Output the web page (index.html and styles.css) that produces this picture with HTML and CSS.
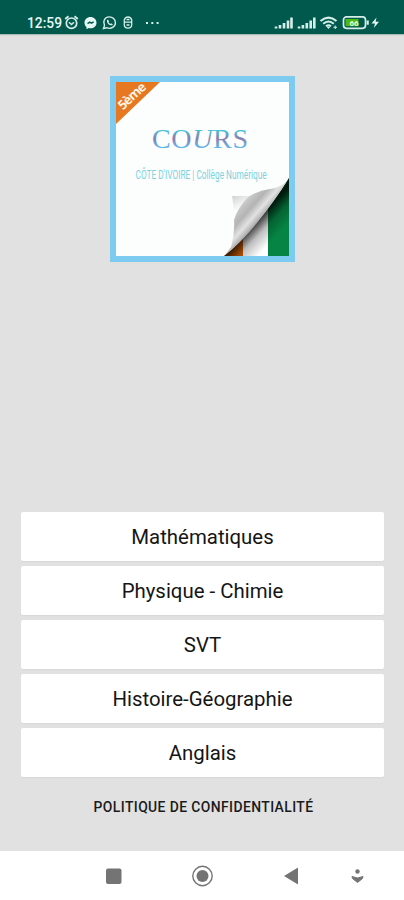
FILE: index.html
```html
<!DOCTYPE html>
<html lang="fr">
<head>
    <meta charset="UTF-8">
    <meta name="viewport" content="width=device-width, initial-scale=1.0">
    <title>Cours 5ème</title>
    <link rel="stylesheet" href="styles.css">
</head>
<body>
    <div class="screen">
        <!-- Status bar -->
        <header class="status-bar">
            <span class="time">12:59</span>
            <svg class="notifications" width="98" height="16" viewBox="0 0 98 16" fill="none" stroke="#d5eee9">
                <!-- alarm -->
                <circle cx="7.5" cy="8.2" r="5.2" stroke-width="1.7"/>
                <path d="M1.2 4L4.500 1.300M10.500 1.300L13.800 4" stroke-width="1.900"/>
                <path d="M5 7.300L7.500 9.500L10 7.300" stroke-width="1.500"/>
                <!-- messenger -->
                <path d="M26.500 2C23 2 20.500 4.500 20.500 7.700C20.500 9.500 21.300 11 22.500 12V14.300L24.700 13.100C29.200 14 32.500 11.300 32.500 7.700C32.500 4.500 30 2 26.500 2Z" fill="#e6f8f5" stroke="none"/>
                <path d="M23.500 8.700L25.800 7.200L27.400 8.200L29.700 6.900" stroke="#00594c" stroke-width="1.500"/>
                <!-- whatsapp -->
                <path d="M39.500 13.500L40.500 10.400C38.300 6.300 41 1.900 45.200 1.900C48.800 1.900 51.400 4.500 51.400 7.700C51.400 11.800 47 14.600 42.700 12.700Z" stroke-width="1.400"/>
                <path d="M43 5C42.500 8 45 10.500 48.300 10.300L48.800 9.200L47 8.200L46.200 8.900L44.500 7.200L45 6.300L44.200 4.700Z" fill="#d5eee9" stroke="none"/>
                <!-- mouse -->
                <path d="M60.300 7V5Q61 2 64 2T67.700 5V9.800Q67.700 13.200 64 13.200T60.300 9.800ZM60.500 7.200H67.500M62.500 4.500H65.500M62.500 10H65.500" stroke-width="1.300"/>
                <!-- more -->
                <path d="M82 8H84M87.300 8H89.300M92.600 8H94.600" stroke-width="2"/>
            </svg>
            <svg class="system" width="108" height="16" viewBox="0 0 108 16" fill="none" stroke="#d5eee9">
                <!-- signal x2 -->
                <path d="M2 13.500V11.500M6 13.500V10M10 13.500V8M14 13.500V5.500M17.500 13.500V2.500M25 13.500V11.500M28.900 13.500V10M32.800 13.500V8M36.700 13.500V5.500M40.300 13.500V2.500" stroke-width="2.600"/>
                <!-- wifi -->
                <path d="M46.500 6Q54.500 -.8 62.500 6M49.200 8.800Q54.500 4.200 59.800 8.800M52 11.300Q54.500 9.300 57 11.300" stroke-width="2.100"/>
                <path d="M52.800 12L54.500 13.900L56.200 12Z" fill="#d5eee9" stroke="none"/>
                <path d="M61.200 10.500V14M59.400 12.300H63" stroke-width="1"/>
                <!-- battery -->
                <rect x="69.500" y="1.900" width="22" height="11.400" rx="3" stroke-width="1.700"/>
                <path d="M93.700 5.500V9.700" stroke-width="2.200"/>
                <path d="M71.500 4H84.500V11.200H71.500Z" fill="#4cba16" stroke="none"/>
                <text x="75.500" y="10.700" class="battery-level">66</text>
                <path d="M102.500 2.500L97.500 8.600H101L99.800 13L105 6.700H101.600Z" fill="#e6f8f5" stroke="none"/>
            </svg>
        </header>

        <main class="content">
            <svg class="logo" width="185" height="186" viewBox="0 0 185 186">
                <defs>
                    <linearGradient id="title" x1="0" y1="0" x2="0" y2="1">
                        <stop offset=".25" stop-color="#46c0d8"/>
                        <stop offset=".5" stop-color="#8a7fae"/>
                        <stop offset=".78" stop-color="#62b5e8"/>
                    </linearGradient>
                    <linearGradient id="curl" gradientUnits="userSpaceOnUse" x1="124" y1="125" x2="150" y2="148">
                        <stop offset="0" stop-color="#f4f4f4"/>
                        <stop offset=".3" stop-color="#c4c4c4"/>
                        <stop offset=".5" stop-color="#b4b4b4"/>
                        <stop offset=".72" stop-color="#e2e2e2"/>
                        <stop offset=".88" stop-color="#b4b4b4"/>
                        <stop offset="1" stop-color="#777"/>
                    </linearGradient>
                    <linearGradient id="shade" gradientUnits="userSpaceOnUse" x1="143" y1="149" x2="161" y2="166">
                        <stop offset="0" stop-color="#000" stop-opacity=".8"/>
                        <stop offset=".45" stop-color="#000" stop-opacity=".25"/>
                        <stop offset="1" stop-color="#000" stop-opacity="0"/>
                    </linearGradient>
                    <linearGradient id="tip" x1="0" y1="0" x2=".6" y2="1">
                        <stop offset="0" stop-color="#d2d2d2"/>
                        <stop offset=".6" stop-color="#fcfdfd"/>
                    </linearGradient>
                    <clipPath id="corner">
                        <path d="M179 102Q164 126 146 147Q131 166 114 180H179Z"/>
                    </clipPath>
                </defs>
                <rect width="185" height="186" fill="#7ecbf2"/>
                <rect x="6" y="6" width="173" height="174" fill="#fcfdfd"/>
                <path d="M6 6H50L6 48Z" fill="#e57820"/>
                <text class="level" x="0" y="0" textLength="33" transform="translate(13 34.500) rotate(-43)">5ème</text>
                <text class="logo-title" x="42" y="72" textLength="96" fill="url(#title)">CO<tspan class="swash">U</tspan>RS</text>
                <text class="logo-subtitle" transform="translate(25.500 102.500) scale(.638 1)">CÔTE D'IVOIRE | Collège Numérique</text>
                <!-- flag under the turned page -->
                <g clip-path="url(#corner)">
                    <path d="M110 100H133V180H110Z" fill="#d46208"/>
                    <path d="M133 100H158V180H133Z" fill="#fff"/>
                    <path d="M158 100H180V180H158Z" fill="#058443"/>
                    <path d="M110 100H180V180H110Z" fill="url(#shade)"/>
                </g>
                <path d="M122 120H144L125 141Z" fill="url(#tip)"/>
                <path d="M179 102Q174 111 160 113Q147 115 138 121Q128 131 124 144Q125 158 121 171L114 180Q131 167 147 147Q164 126 179 102Z" fill="url(#curl)"/>
            </svg>

            <nav class="subjects">
                <button class="subject">Mathématiques</button>
                <button class="subject">Physique - Chimie</button>
                <button class="subject">SVT</button>
                <button class="subject">Histoire-Géographie</button>
                <button class="subject">Anglais</button>
            </nav>
            <a class="privacy">POLITIQUE DE CONFIDENTIALITÉ</a>
        </main>

        <!-- Android navigation bar -->
        <footer class="nav-bar">
            <svg width="404" height="49" viewBox="0 0 404 49" fill="#747474">
                <rect x="106" y="17.500" width="15.500" height="15.500" rx="2"/>
                <circle cx="202.500" cy="25" r="9.700" fill="none" stroke="#747474" stroke-width="1.400"/>
                <circle cx="202.500" cy="25" r="6"/>
                <path d="M284 25L298 16.500V33.500Z"/>
                <circle cx="357.500" cy="20.500" r="2.200"/>
                <path d="M352 25.500L357.500 27L363 25.500L362.500 27.500L357.500 31.500L352.500 27.500Z" stroke="#747474" stroke-linejoin="round"/>
            </svg>
        </footer>
    </div>
</body>
</html>
```
FILE: styles.css
```css
* {
    box-sizing: border-box;
}
body {
    font-family: Roboto, "Liberation Sans", sans-serif;
    background-color: #e1e1e1;
    margin: 0;
}
.screen {
    display: flex;
    flex-direction: column;
    height: 900px;
}
.status-bar {
    display: flex;
    align-items: flex-start;
    height: 34px;
    padding: 15px 22px 0 27px;
    background-color: #00594c;
    box-shadow: 0 1px 1px #a5b9b5;
}
.time {
    width: 37px;
    font-size: 13.8px;
    font-weight: 500;
    line-height: 16px;
    color: #e6f8f5;
}
.system {
    margin-left: auto;
}
.battery-level {
    font-size: 8px;
    font-weight: bold;
    fill: #e8ffd8;
    stroke: none;
}
.content {
    display: flex;
    flex-direction: column;
    align-items: center;
    flex: 1;
    padding-top: 42px;
}
.logo {
    margin: 0 0 250px 1px;
}
.level {
    font-family: "Open Sans", sans-serif;
    font-size: 13px;
    font-weight: bold;
    fill: #fff3e4;
}
.logo-title {
    font-family: "Liberation Serif", serif;
    font-size: 28px;
}
.swash {
    font-style: italic;
}
.logo-subtitle {
    font-family: Roboto, sans-serif;
    font-size: 13px;
    fill: #7bd3de;
}
.subjects {
    display: flex;
    flex-direction: column;
    gap: 5px;
    width: 363px;
    margin-left: 1px;
}
.subject {
    height: 49px;
    padding: 0;
    border: none;
    border-radius: 2px;
    background-color: #fff;
    box-shadow: 0 1px 1px #d8d8d8;
    font-family: inherit;
    font-size: 20.4px;
    color: #151515;
}
.privacy {
    margin: 21px 0 0 3px;
    font-size: 13.9px;
    font-weight: 500;
    line-height: 18px;
    letter-spacing: 0.41px;
    color: #1a1a1a;
}
.nav-bar {
    height: 49px;
    background-color: #fff;
}
```
